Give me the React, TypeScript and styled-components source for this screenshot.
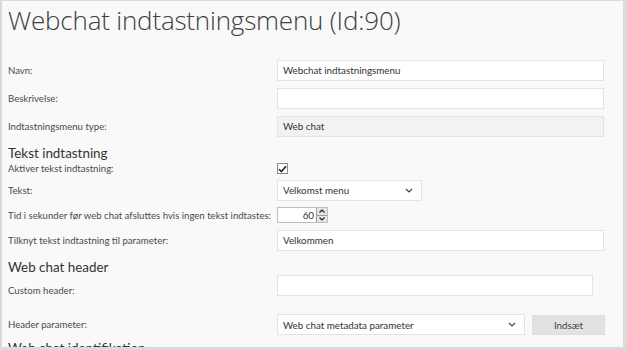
import styled, { createGlobalStyle } from 'styled-components';

const GlobalStyle = createGlobalStyle`
  html, body {
    margin: 0;
    padding: 0;
    background: #ffffff;
  }
  body {
    font-family: Lato, "Open Sans", sans-serif;
    color: #333333;
  }
`;

const Frame = styled.div`
  box-sizing: border-box;
  width: 627px;
  height: 350px;
  overflow: hidden;
  background: #f9f9f9;
  border-style: solid;
  border-color: #dadada;
  border-width: 1px 4px 3px 2px;
  padding: 0 0 0 6px;
`;

const Title = styled.h1`
  margin: 2px 0 19px;
  font-family: "Open Sans", sans-serif;
  font-size: 26px;
  font-weight: 300;
  line-height: 34px;
  color: #404040;
  letter-spacing: -0.2px;
`;

const SectionTitle = styled.h2<{ $gap?: number }>`
  margin: ${(p) => p.$gap ?? 5}px 0 0;
  font-size: 13.4px;
  font-weight: 400;
  line-height: 16px;
  color: #333333;
  white-space: nowrap;
`;

const Row = styled.div<{ $height?: number; $gap?: number }>`
  display: grid;
  grid-template-columns: 269px 1fr;
  align-items: center;
  height: ${(p) => p.$height ?? 28}px;
  margin-top: ${(p) => p.$gap ?? 0}px;
`;

const Label = styled.label<{ $bottom?: boolean }>`
  align-self: ${(p) => (p.$bottom ? 'end' : 'center')};
  padding-bottom: ${(p) => (p.$bottom ? 1 : 0)}px;
  font-size: 9.6px;
  color: #4a4a4a;
  white-space: nowrap;
`;

const Field = styled.div<{ $top?: boolean }>`
  align-self: ${(p) => (p.$top ? 'start' : 'center')};
  display: flex;
  align-items: center;
  gap: 7px;
`;

const TextBox = styled.div<{ $width: number; $readonly?: boolean }>`
  box-sizing: border-box;
  width: ${(p) => p.$width}px;
  height: 21px;
  padding: 0 5px;
  display: flex;
  align-items: center;
  font-size: 9.8px;
  color: #333333;
  background: ${(p) => (p.$readonly ? '#f2f2f2' : '#ffffff')};
  border: 1px solid #e4e4e4;
`;

const SelectBox = styled(TextBox)`
  justify-content: space-between;
  padding-right: 8px;
`;

const Chevron = () => (
  <svg width="8" height="5" viewBox="0 0 8 5">
    <path d="M1 1 L4 4 L7 1" fill="none" stroke="#444" strokeWidth="1.2" />
  </svg>
);

const Check = styled.span`
  box-sizing: border-box;
  width: 11px;
  height: 11px;
  border: 1px solid #8a8a8a;
  background: #ffffff;
  display: flex;
  align-items: center;
  justify-content: center;
`;

const NumberBox = styled.div`
  box-sizing: border-box;
  width: 51px;
  height: 16px;
  display: flex;
  align-items: stretch;
  border: 1px solid #bdbdbd;
  background: #ffffff;
  font-size: 9.8px;
`;

const NumberValue = styled.span`
  flex: 1;
  text-align: right;
  padding-right: 2px;
  line-height: 14px;
`;

const Spinner = styled.div`
  width: 10px;
  display: flex;
  flex-direction: column;
  border-left: 1px solid #9a9a9a;
  background: #e6e6e6;
`;

const SpinHalf = styled.div<{ $bottom?: boolean }>`
  flex: 1;
  display: flex;
  align-items: center;
  justify-content: center;
  border-top: ${(p) => (p.$bottom ? '1px solid #9a9a9a' : 'none')};
`;

const Button = styled.button`
  box-sizing: border-box;
  width: 73px;
  height: 20px;
  border: 1px solid #dedede;
  background: #e2e2e2;
  color: #444444;
  font-family: inherit;
  font-size: 9.8px;
  padding: 0;
`;

export default function App() {
  return (
    <>
      <GlobalStyle />
      <Frame>
        <Title>Webchat indtastningsmenu (Id:90)</Title>
        <Row>
          <Label>Navn:</Label>
          <Field>
            <TextBox $width={327}>Webchat indtastningsmenu</TextBox>
          </Field>
        </Row>
        <Row>
          <Label>Beskrivelse:</Label>
          <Field>
            <TextBox $width={327} />
          </Field>
        </Row>
        <Row>
          <Label>Indtastningsmenu type:</Label>
          <Field>
            <TextBox $width={327} $readonly>
              Web chat
            </TextBox>
          </Field>
        </Row>
        <SectionTitle>Tekst indtastning</SectionTitle>
        <Row $height={15}>
          <Label>Aktiver tekst indtastning:</Label>
          <Field>
            <Check>
              <svg width="9" height="8" viewBox="0 0 9 8">
                <path d="M1 4.2 L3.4 6.6 L8 1.2" fill="none" stroke="#222" strokeWidth="1.6" />
              </svg>
            </Check>
          </Field>
        </Row>
        <Row>
          <Label>Tekst:</Label>
          <Field>
            <SelectBox $width={145}>
              Velkomst menu
              <Chevron />
            </SelectBox>
          </Field>
        </Row>
        <Row $height={22}>
          <Label>Tid i sekunder før web chat afsluttes hvis ingen tekst indtastes:</Label>
          <Field>
            <NumberBox>
              <NumberValue>60</NumberValue>
              <Spinner>
                <SpinHalf>
                  <svg width="6" height="4" viewBox="0 0 6 4">
                    <path d="M0.5 3.5 L3 1 L5.5 3.5" fill="none" stroke="#222" strokeWidth="1.2" />
                  </svg>
                </SpinHalf>
                <SpinHalf $bottom>
                  <svg width="6" height="4" viewBox="0 0 6 4">
                    <path d="M0.5 0.5 L3 3 L5.5 0.5" fill="none" stroke="#222" strokeWidth="1.2" />
                  </svg>
                </SpinHalf>
              </Spinner>
            </NumberBox>
          </Field>
        </Row>
        <Row>
          <Label>Tilknyt tekst indtastning til parameter:</Label>
          <Field>
            <TextBox $width={327}>Velkommen</TextBox>
          </Field>
        </Row>
        <SectionTitle $gap={5}>Web chat header</SectionTitle>
        <Row $height={22}>
          <Label $bottom>Custom header:</Label>
          <Field $top>
            <TextBox $width={316} />
          </Field>
        </Row>
        <Row $height={27} $gap={14}>
          <Label>Header parameter:</Label>
          <Field>
            <SelectBox $width={248}>
              Web chat metadata parameter
              <Chevron />
            </SelectBox>
            <Button>Indsæt</Button>
          </Field>
        </Row>
        <SectionTitle $gap={2}>Web chat identifikation</SectionTitle>
      </Frame>
    </>
  );
}
